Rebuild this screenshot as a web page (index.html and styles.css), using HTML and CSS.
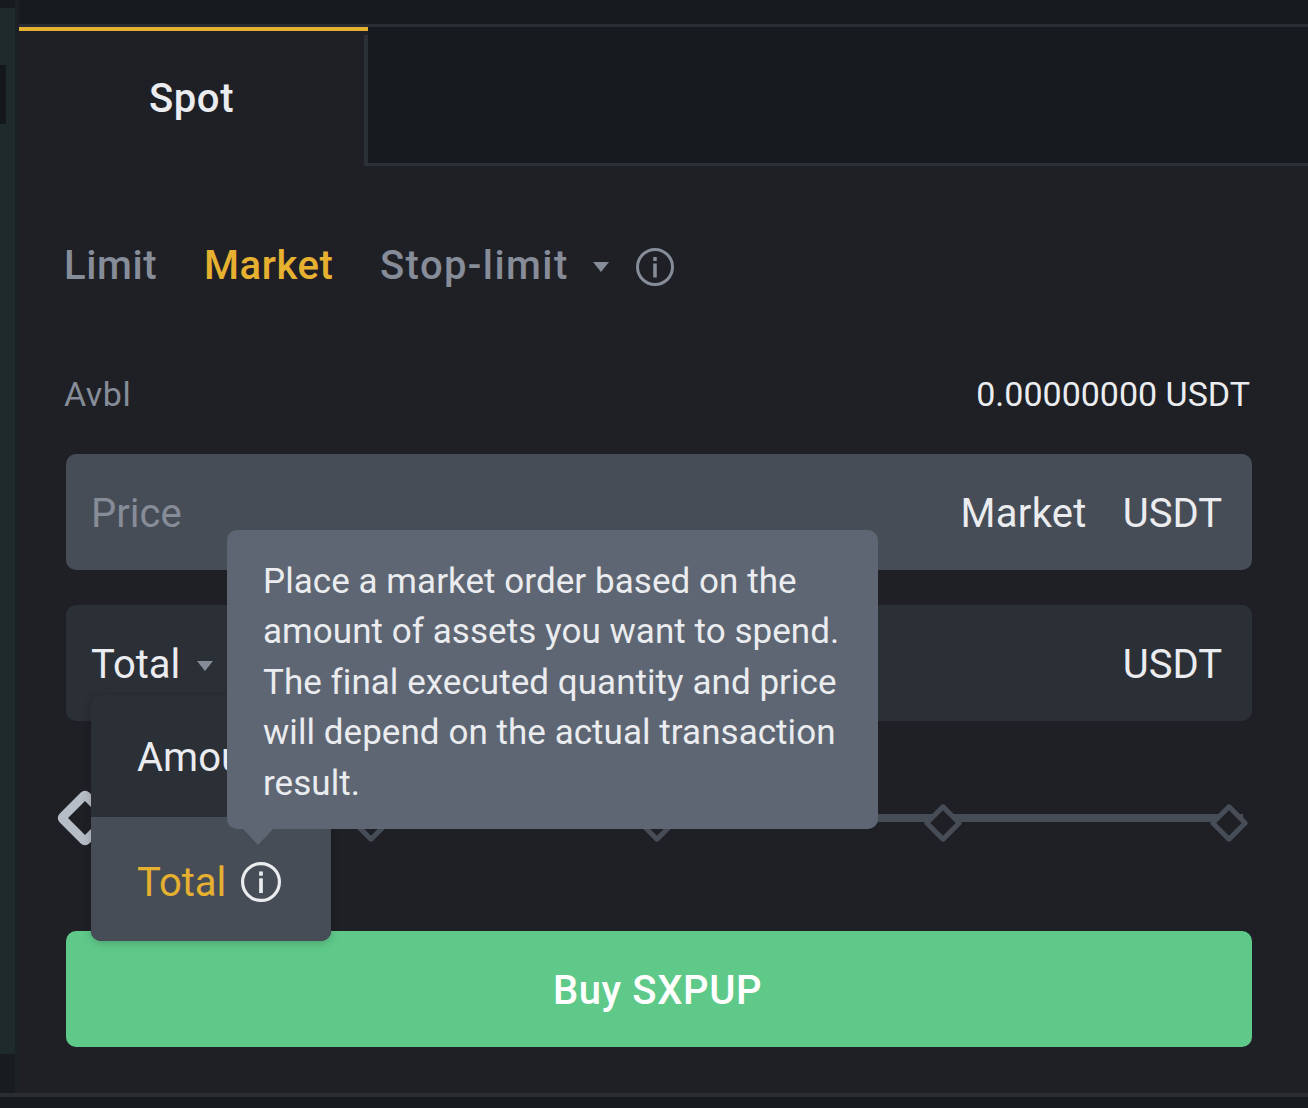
FILE: index.html
```html
<!DOCTYPE html>
<html lang="en">
<head>
<meta charset="utf-8">
<title>Spot order form</title>
<link rel="stylesheet" href="styles.css">
</head>
<body>
<div class="page">
  <aside class="rail">
    <div class="rail-top"></div>
    <div class="rail-strip"><div class="rail-block"></div></div>
    <div class="rail-low"></div>
    <div class="rail-line"></div>
    <div class="rail-end"></div>
  </aside>
  <div class="main">
    <div class="topband"></div>
    <section class="panel">
      <nav class="tabs">
        <div class="tab">Spot</div>
        <div class="tab-rest"></div>
      </nav>
      <div class="form">
        <div class="types">
          <span class="type type-limit">Limit</span>
          <span class="type type-market">Market</span>
          <span class="type type-stop">Stop-limit</span>
          <span class="caret caret-stop"></span>
          <svg class="info info-types" viewBox="0 0 38 38" aria-hidden="true">
            <circle cx="19" cy="19" r="17.5" fill="none" stroke="currentColor" stroke-width="3"/>
            <rect x="17.25" y="9" width="3.5" height="4" fill="currentColor"/>
            <rect x="17.25" y="15.5" width="3.5" height="14" fill="currentColor"/>
          </svg>
        </div>
        <div class="avbl">
          <span class="avbl-label">Avbl</span>
          <span class="avbl-value">0.00000000 USDT</span>
        </div>
        <div class="field field-price">
          <span class="placeholder">Price</span>
          <span class="field-value">Market</span>
          <span class="unit">USDT</span>
        </div>
        <div class="field field-total">
          <span class="select">Total</span>
          <span class="caret caret-total"></span>
          <span class="unit unit-end">USDT</span>
          <div class="dropdown">
            <div class="option">Amount</div>
            <div class="option option-active">
              <span>Total</span>
              <svg class="info info-option" viewBox="0 0 38 38" aria-hidden="true">
                <circle cx="19" cy="19" r="17.5" fill="none" stroke="currentColor" stroke-width="3"/>
                <rect x="17.25" y="9" width="3.5" height="4" fill="currentColor"/>
                <rect x="17.25" y="15.5" width="3.5" height="14" fill="currentColor"/>
              </svg>
            </div>
            <div class="tooltip">Place a market order based on the amount of assets you want to spend. The final executed quantity and price will depend on the actual transaction result.</div>
          </div>
        </div>
        <div class="slider">
          <span class="mark mark-first"></span>
          <span class="mark"></span>
          <span class="mark"></span>
          <span class="mark"></span>
          <span class="mark"></span>
        </div>
        <button class="buy" type="button">Buy SXPUP</button>
      </div>
    </section>
    <div class="bottomband"></div>
  </div>
</div>
</body>
</html>
```
FILE: styles.css
```css
* { box-sizing: border-box; }
html, body { margin: 0; padding: 0; }
body {
  width: 1308px;
  height: 1108px;
  overflow: hidden;
  background: #171a1f;
  font-family: Roboto, "Noto Sans", "Liberation Sans", sans-serif;
  color: #eaecef;
}
.page { display: flex; height: 1108px; }

.rail {
  width: 19px;
  flex: none;
  display: flex;
  flex-direction: column;
  background: #1c2125;
}
.rail-top { width: 15px; height: 8px; background: #171a1f; }
.rail-strip { width: 15px; flex: 1; padding-top: 57px; background: #1f2a2b; }
.rail-block { width: 6px; height: 59px; background: #14171b; }
.rail-low { width: 15px; height: 39px; background: #181b20; }
.rail-line { height: 4px; background: #2a2e33; }
.rail-end { height: 11px; background: #171a1f; }

.main { flex: 1; min-width: 0; display: flex; flex-direction: column; }
.topband { height: 27px; background: #171a1f; border-bottom: 3px solid #292d33; }

.panel { flex: none; height: 1070px; background: #1e2026; border-bottom: 4px solid #2a2e33; }
.tabs { display: flex; height: 139px; background: #171a1f; }
.tab {
  width: 349px;
  padding: 46px 4px 0 0;
  border-top: 4px solid #e6b030;
  background: #1e2026;
  text-align: center;
  font-size: 40px;
  line-height: 44px;
  letter-spacing: 0.6px;
  font-weight: 500;
  color: #eaecef;
}
.tab-rest {
  flex: 1;
  margin: 8px 0 0 -4px;
  border-left: 4px solid #2b2f36;
  border-bottom: 3px solid #2b2f36;
}

.form { padding: 0 56px 0 47px; }

.types { display: flex; align-items: center; height: 44px; margin: 77px 0 0 -2px; font-size: 40px; letter-spacing: 0.6px; font-weight: 500; color: #868c98; }
.type-limit { width: 140px; }
.type-market { width: 176px; color: #e6b030; }
.type-stop { width: 213px; letter-spacing: 1.4px; }
.caret { width: 0; height: 0; border-left: 8.5px solid transparent; border-right: 8.5px solid transparent; border-top: 10px solid #868c98; }
.caret-stop { margin-top: 4px; }
.info { display: block; flex: none; }
.info-types { width: 38px; height: 38px; margin-left: 27px; margin-top: 4px; color: #868c98; }

.avbl { display: flex; justify-content: space-between; align-items: center; height: 40px; margin: 87px 0 0 -2px; font-size: 34px; padding-right: 2px; }
.avbl-label { color: #868c98; letter-spacing: 0.5px; }
.avbl-value { color: #eaecef; }

.field {
  position: relative;
  display: flex;
  align-items: center;
  height: 116px;
  border-radius: 10px;
  padding: 2px 30px 0 25px;
  font-size: 40px;
}
.field-price { margin-top: 40px; background: #474d57; }
.field-total { margin-top: 35px; background: #2b2f36; }
.placeholder { flex: 1; color: #868c98; }
.field-value { margin-right: 36px; letter-spacing: 0.3px; color: #eaecef; }
.unit { color: #eaecef; }
.unit-end { margin-left: auto; }
.select { color: #eaecef; }
.caret-total { margin-left: 17px; margin-top: 4px; }

.dropdown {
  position: absolute;
  left: 25px;
  top: 90px;
  width: 240px;
  height: 246px;
  z-index: 2;
  border-radius: 10px;
  background: #2b2f36;
  box-shadow: 0 2px 10px rgba(0, 0, 0, 0.2);
}
.option { display: flex; align-items: center; height: 122px; padding-left: 46px; padding-top: 2px; color: #eaecef; }
.option-active { height: 124px; padding-top: 6px; background: #474d57; color: #e6b030; border-radius: 0 0 10px 10px; }
.info-option { width: 40px; height: 40px; margin-left: 15px; color: #eaecef; }

.tooltip {
  position: absolute;
  left: 136px;
  top: -165px;
  width: 651px;
  height: 299px;
  padding: 27px 20px 0 36px;
  border-radius: 10px;
  background: #5e6673;
  color: #eaecef;
  font-size: 35px;
  line-height: 50.4px;
  letter-spacing: 0.05px;
}
.tooltip::after {
  content: "";
  position: absolute;
  left: 16px;
  bottom: -16px;
  width: 0;
  height: 0;
  border-left: 15px solid transparent;
  border-right: 15px solid transparent;
  border-top: 16px solid #5e6673;
}

.slider {
  display: flex;
  justify-content: space-between;
  align-items: center;
  height: 48px;
  margin: 78px 9px 84px 5px;
  background: linear-gradient(#474d57, #474d57) 0 15px / 100% 8px no-repeat;
}
.mark {
  width: 28px;
  height: 28px;
  transform: rotate(45deg);
  border: 5px solid #474d57;
  border-radius: 3px;
  background: #1e2026;
}
.mark-first {
  width: 42px;
  height: 42px;
  margin: 0 -7px;
  transform: translateY(-5px) rotate(45deg);
  border: 9px solid #b7bdc6;
  border-radius: 6px;
}

.buy {
  display: block;
  width: 100%;
  height: 116px;
  padding: 3px 3px 0 0;
  border: 0;
  border-radius: 10px;
  background: #5fc98a;
  color: #fff;
  font: 500 40px Roboto, "Noto Sans", sans-serif;
  letter-spacing: 0.6px;
}
```
